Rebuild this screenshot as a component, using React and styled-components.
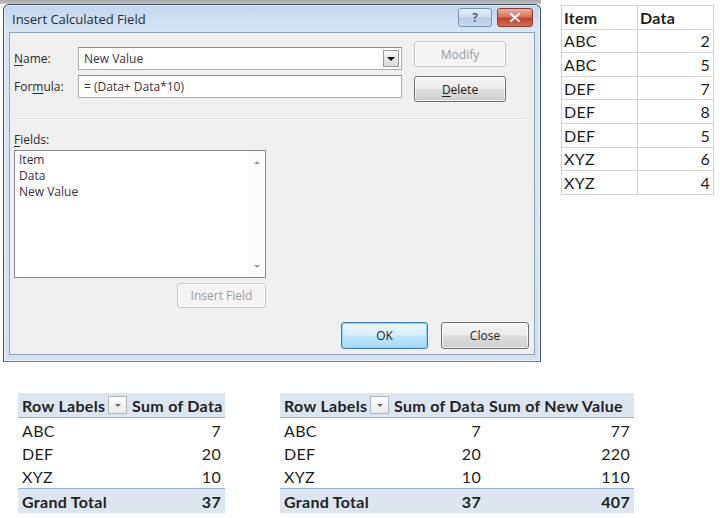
import React from 'react';
import styled, { createGlobalStyle } from 'styled-components';

const GlobalStyle = createGlobalStyle`
  html, body {
    margin: 0;
    padding: 0;
    background: #fff;
  }
  body {
    width: 720px;
    height: 518px;
    overflow: hidden;
    font-family: "Open Sans", "Noto Sans", sans-serif;
  }
`;

const Page = styled.div`
  width: 720px;
  height: 518px;
  display: flex;
  flex-direction: column;
`;

const TopRow = styled.div`
  display: flex;
  align-items: flex-start;
`;

const DialogArea = styled.div`
  padding: 4px 0 0 3px;
  background: linear-gradient(#a8a8a8 0, #c4c4c4 4px, #fff 4px);
`;

const Dialog = styled.div`
  width: 538px;
  height: 358px;
  box-sizing: border-box;
  border: 1px solid #3f5366;
  border-bottom-color: #4f8aa3;
  border-radius: 6px 6px 0 0;
  background: linear-gradient(180deg, #c2d6ec 0, #d8e6f4 27px, #d2e2f1 100%);
  box-shadow: inset 0 0 0 1px rgba(255, 255, 255, 0.55);
  padding: 0 5px 6px 5px;
  display: flex;
  flex-direction: column;
`;

const TitleBar = styled.div`
  height: 27px;
  display: flex;
  align-items: flex-start;
  justify-content: space-between;
`;

const Title = styled.div`
  font-size: 13px;
  color: #1d2b3b;
  padding: 5px 0 0 3px;
`;

const TitleButtons = styled.div`
  display: flex;
  gap: 5px;
  padding: 3px 2px 0 0;
`;

const CaptionButton = styled.div`
  width: ${(p) => p.$w}px;
  height: 19px;
  box-sizing: border-box;
  border-radius: 3px;
  display: flex;
  align-items: center;
  justify-content: center;
  font-size: 12px;
  font-weight: 700;
  border: 1px solid ${(p) => (p.$close ? '#8b3b2b' : '#7793b2')};
  color: ${(p) => (p.$close ? '#fff' : '#4a6c93')};
  background: ${(p) =>
    p.$close
      ? 'linear-gradient(180deg, #eab0a2 0%, #d9745c 45%, #c3412a 55%, #d96a4b 100%)'
      : 'linear-gradient(180deg, #e6eff8 0%, #cddcee 45%, #b9cde4 55%, #c8d9ec 100%)'};
`;

const Body = styled.div`
  flex: 1;
  background: #f0f0f0;
  border: 1px solid #8da3b8;
  padding: 8px 5px 0 4px;
  display: flex;
  flex-direction: column;
`;

const TopSection = styled.div`
  display: flex;
  align-items: flex-start;
`;

const FormGrid = styled.div`
  margin-top: 6px;
  display: grid;
  grid-template-columns: 64px 324px;
  grid-auto-rows: 23px;
  row-gap: 5px;
  align-items: center;
`;

const Label = styled.div`
  font-size: 12px;
  color: #2a2a2a;
  line-height: 16px;
  u {
    text-decoration: underline;
    text-underline-offset: 2px;
  }
`;

const TextBox = styled.div`
  height: 23px;
  box-sizing: border-box;
  border: 1px solid #abadb3;
  border-top-color: #8c8f96;
  background: #fff;
  display: flex;
  align-items: center;
  padding: 0 2px 0 5px;
  font-size: 12px;
  color: #3d3442;
`;

const ComboText = styled.span`
  flex: 1;
`;

const DropButton = styled.div`
  width: 16px;
  height: 17px;
  box-sizing: border-box;
  border: 1px solid #999;
  background: linear-gradient(180deg, #f7f7f7, #dadada);
  display: flex;
  align-items: center;
  justify-content: center;
`;

const Caret = styled.span`
  width: 0;
  height: 0;
  border-left: ${(p) => p.$size || 4}px solid transparent;
  border-right: ${(p) => p.$size || 4}px solid transparent;
  border-top: ${(p) => p.$size || 4}px solid ${(p) => p.$color || '#111'};
  transform: ${(p) => (p.$up ? 'rotate(180deg)' : 'none')};
`;

const ButtonCol = styled.div`
  margin-left: 12px;
  display: flex;
  flex-direction: column;
  gap: 9px;
`;

const Button = styled.div`
  width: ${(p) => p.$w || 92}px;
  height: ${(p) => p.$h || 26}px;
  box-sizing: border-box;
  border-radius: 3px;
  display: flex;
  align-items: center;
  justify-content: center;
  font-size: 12px;
  border: 1px solid ${(p) => (p.$disabled ? '#c2c6c9' : p.$default ? '#3c7fb1' : '#707070')};
  color: ${(p) => (p.$disabled ? '#9a9a9a' : '#1e1e1e')};
  background: ${(p) =>
    p.$disabled
      ? '#f4f4f4'
      : p.$default
      ? 'linear-gradient(180deg, #eaf6fd 0%, #d9f0fc 48%, #bee6fd 52%, #a7d9f5 100%)'
      : 'linear-gradient(180deg, #f6f6f6 0%, #ebebeb 48%, #dddddd 52%, #cfcfcf 100%)'};
  box-shadow: ${(p) => (p.$default ? 'inset 0 0 0 1px #8fd1f5' : 'inset 0 0 0 1px rgba(255,255,255,0.7)')};
  u {
    text-decoration: underline;
    text-underline-offset: 2px;
  }
`;

const Separator = styled.div`
  margin: 16px 2px 0 -4px;
  height: 1px;
  background: #e4e4e4;
  border-bottom: 1px solid #f8f8f8;
`;

const FieldsBlock = styled.div`
  width: 252px;
  margin-top: 12px;
  display: flex;
  flex-direction: column;
  align-items: flex-end;
`;

const FieldsLabel = styled(Label)`
  align-self: flex-start;
  margin-bottom: 2px;
`;

const ListBox = styled.div`
  width: 252px;
  height: 128px;
  box-sizing: border-box;
  border: 1px solid #828790;
  background: #fff;
  display: flex;
`;

const ListItems = styled.div`
  flex: 1;
  padding: 1px 4px;
  font-size: 12px;
  line-height: 16px;
  color: #3a2f3f;
`;

const ScrollBar = styled.div`
  width: 17px;
  display: flex;
  flex-direction: column;
  justify-content: space-between;
  align-items: center;
  padding: 10px 0 9px;
  background: #fbfbfb;
`;

const InsertButton = styled(Button)`
  margin-top: 5px;
`;

const Footer = styled.div`
  margin-top: 14px;
  display: flex;
  justify-content: flex-end;
  gap: 13px;
`;

const DataTable = styled.div`
  margin: 5px 0 0 20px;
  display: grid;
  grid-template-columns: 76px 76px;
  grid-auto-rows: 23.6px;
  border-left: 1px solid #d4d4d4;
  border-top: 1px solid #d4d4d4;
  font-family: Lato, "Open Sans", sans-serif;
  font-size: 16px;
  letter-spacing: 0.3px;
  color: #1f1f1f;
`;

const Cell = styled.div`
  border-right: 1px solid #d4d4d4;
  border-bottom: 1px solid #d4d4d4;
  display: flex;
  align-items: center;
  justify-content: ${(p) => (p.$num ? 'flex-end' : 'flex-start')};
  padding: 0 3px 0 2px;
  font-weight: ${(p) => (p.$bold ? 700 : 400)};
`;

const BottomRow = styled.div`
  margin-top: 31px;
  display: flex;
  align-items: flex-start;
  gap: 55px;
  padding-left: 18px;
`;

const Pivot = styled.div`
  display: grid;
  grid-template-columns: ${(p) => p.$cols};
  grid-template-rows: 25px 24px 23px 23px 25px;
  font-family: Lato, "Open Sans", sans-serif;
  font-size: 16px;
  letter-spacing: 0.3px;
  color: #1f1f1f;
`;

const PCell = styled.div`
  display: flex;
  align-items: center;
  justify-content: ${(p) => (p.$num ? 'flex-end' : p.$left ? 'flex-start' : 'space-between')};
  padding: 0 4px;
  white-space: nowrap;
  font-weight: ${(p) => (p.$band ? 700 : 400)};
  background: ${(p) => (p.$band ? '#dce6f1' : '#fff')};
  border-bottom: ${(p) => (p.$head ? '1px solid #95b3d7' : 'none')};
  border-top: ${(p) => (p.$total ? '1px solid #95b3d7' : 'none')};
`;

const FilterButton = styled.div`
  width: 19px;
  height: 18px;
  box-sizing: border-box;
  border: 1px solid #b4b4b4;
  background: linear-gradient(180deg, #ffffff, #e9e9e9);
  display: flex;
  align-items: center;
  justify-content: center;
  margin-right: -3px;
`;

const dataRows = [
  ['ABC', 2],
  ['ABC', 5],
  ['DEF', 7],
  ['DEF', 8],
  ['DEF', 5],
  ['XYZ', 6],
  ['XYZ', 4],
];

function PivotTable({ cols, headers, rows, total }) {
  return (
    <Pivot $cols={cols}>
      {headers.map((h, i) =>
        i === 0 ? (
          <PCell key={h} $band $head>
            {h}
            <FilterButton>
              <Caret $size={3} $color="#666" />
            </FilterButton>
          </PCell>
        ) : (
          <PCell key={h} $band $head $left>
            {h}
          </PCell>
        )
      )}
      {rows.map((r) =>
        r.map((v, i) => (
          <PCell key={r[0] + i} $num={i > 0}>
            {v}
          </PCell>
        ))
      )}
      {total.map((v, i) => (
        <PCell key={'t' + i} $band $total $num={i > 0}>
          {v}
        </PCell>
      ))}
    </Pivot>
  );
}

export default function App() {
  return (
    <Page>
      <GlobalStyle />
      <TopRow>
        <DialogArea>
          <Dialog>
            <TitleBar>
              <Title>Insert Calculated Field</Title>
              <TitleButtons>
                <CaptionButton $w={34}>?</CaptionButton>
                <CaptionButton $w={36} $close>
                  <svg width="10" height="9" viewBox="0 0 10 9">
                    <path d="M1 1 L9 8 M9 1 L1 8" stroke="#fff" strokeWidth="2.2" strokeLinecap="round" />
                  </svg>
                </CaptionButton>
              </TitleButtons>
            </TitleBar>
            <Body>
              <TopSection>
                <FormGrid>
                  <Label>
                    <u>N</u>ame:
                  </Label>
                  <TextBox>
                    <ComboText>New Value</ComboText>
                    <DropButton>
                      <Caret />
                    </DropButton>
                  </TextBox>
                  <Label>
                    For<u>m</u>ula:
                  </Label>
                  <TextBox>= (Data+ Data*10)</TextBox>
                </FormGrid>
                <ButtonCol>
                  <Button $disabled>Modify</Button>
                  <Button>
                    <u>D</u>elete
                  </Button>
                </ButtonCol>
              </TopSection>
              <Separator />
              <FieldsBlock>
                <FieldsLabel>
                  <u>F</u>ields:
                </FieldsLabel>
                <ListBox>
                  <ListItems>
                    <div>Item</div>
                    <div>Data</div>
                    <div>New Value</div>
                  </ListItems>
                  <ScrollBar>
                    <Caret $size={3} $color="#9a9a9a" $up />
                    <Caret $size={3} $color="#9a9a9a" />
                  </ScrollBar>
                </ListBox>
                <InsertButton $disabled $w={89} $h={25}>
                  Insert Field
                </InsertButton>
              </FieldsBlock>
              <Footer>
                <Button $default $w={87} $h={27}>
                  OK
                </Button>
                <Button $w={88} $h={27}>
                  Close
                </Button>
              </Footer>
            </Body>
          </Dialog>
        </DialogArea>
        <DataTable>
          <Cell $bold>Item</Cell>
          <Cell $bold>Data</Cell>
          {dataRows.map(([item, v], i) => (
            <React.Fragment key={i}>
              <Cell>{item}</Cell>
              <Cell $num>{v}</Cell>
            </React.Fragment>
          ))}
        </DataTable>
      </TopRow>
      <BottomRow>
        <PivotTable
          cols="110px 97px"
          headers={['Row Labels', 'Sum of Data']}
          rows={[
            ['ABC', 7],
            ['DEF', 20],
            ['XYZ', 10],
          ]}
          total={['Grand Total', 37]}
        />
        <PivotTable
          cols="110px 95px 149px"
          headers={['Row Labels', 'Sum of Data', 'Sum of New Value']}
          rows={[
            ['ABC', 7, 77],
            ['DEF', 20, 220],
            ['XYZ', 10, 110],
          ]}
          total={['Grand Total', 37, 407]}
        />
      </BottomRow>
    </Page>
  );
}
